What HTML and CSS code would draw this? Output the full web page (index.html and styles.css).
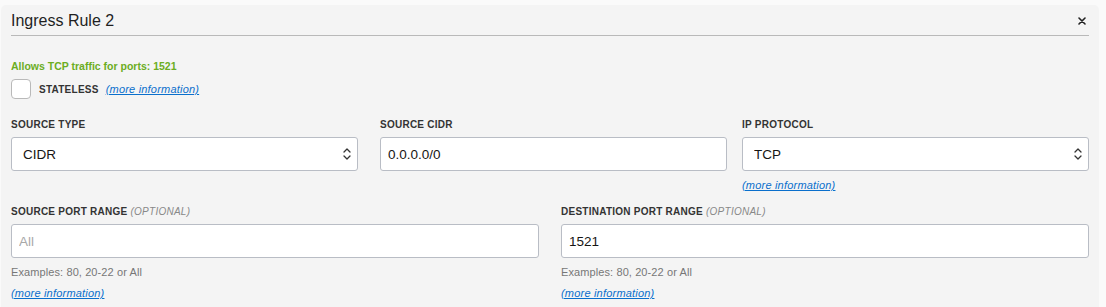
FILE: index.html
```html
<!DOCTYPE html>
<html lang="en">
<head>
  <meta charset="UTF-8">
  <meta name="viewport" content="width=device-width, initial-scale=1.0">
  <title>Ingress Rule 2</title>
  <link rel="stylesheet" href="styles.css">
</head>
<body>
  <div class="panel">
    <div class="panel-header">
      <div class="panel-title">Ingress Rule 2</div>
      <button class="close-btn" aria-label="Remove rule">
        <svg width="8" height="8" viewBox="0 0 8 8"><path d="M1 1 L7 7 M7 1 L1 7" stroke="#222" stroke-width="1.6" stroke-linecap="round"/></svg>
      </button>
    </div>

    <div class="summary">Allows TCP traffic for ports: 1521</div>

    <div class="stateless">
      <span class="checkbox"></span>
      <span class="check-label">Stateless</span>
      <a href="#" class="more-info">(more information)</a>
    </div>

    <div class="row row-three">
      <div class="field">
        <label class="field-label">Source Type</label>
        <div class="select-wrap">
          <select class="control select">
            <option>CIDR</option>
          </select>
          <svg class="chevrons" width="8" height="14" viewBox="0 0 8 14"><path d="M1 5 L4 2 L7 5 M1 9 L4 12 L7 9" fill="none" stroke="#333" stroke-width="1.3" stroke-linecap="round" stroke-linejoin="round"/></svg>
        </div>
      </div>
      <div class="field field-middle">
        <label class="field-label">Source CIDR</label>
        <input class="control" type="text" value="0.0.0.0/0">
      </div>
      <div class="field">
        <label class="field-label">IP Protocol</label>
        <div class="select-wrap">
          <select class="control select">
            <option>TCP</option>
          </select>
          <svg class="chevrons" width="8" height="14" viewBox="0 0 8 14"><path d="M1 5 L4 2 L7 5 M1 9 L4 12 L7 9" fill="none" stroke="#333" stroke-width="1.3" stroke-linecap="round" stroke-linejoin="round"/></svg>
        </div>
        <a href="#" class="more-info under">(more information)</a>
      </div>
    </div>

    <div class="row row-two">
      <div class="field">
        <label class="field-label">Source Port Range <span class="optional">(Optional)</span></label>
        <input class="control" type="text" placeholder="All">
        <div class="hint">Examples: 80, 20-22 or All</div>
        <a href="#" class="more-info under">(more information)</a>
      </div>
      <div class="field">
        <label class="field-label">Destination Port Range <span class="optional">(Optional)</span></label>
        <input class="control" type="text" value="1521">
        <div class="hint">Examples: 80, 20-22 or All</div>
        <a href="#" class="more-info under">(more information)</a>
      </div>
    </div>
  </div>
</body>
</html>
```

FILE: styles.css
```css
body {
  margin: 0;
  background-color: #fafafa;
  font-family: "Liberation Sans", Arial, sans-serif;
  color: #222;
}

.panel {
  margin: 5px 7px 0 1px;
  padding: 0 10px 20px;
  background-color: #f4f4f4;
  border-radius: 5px 5px 0 0;
}

.panel-header {
  display: flex;
  justify-content: space-between;
  align-items: center;
  height: 30px;
  border-bottom: 1px solid #b9b9b9;
}

.panel-title {
  font-size: 16px;
  color: #1f1f1f;
  padding-top: 1px;
}

.close-btn {
  border: none;
  background: none;
  padding: 0;
  margin: 2px 3px 0 0;
  display: flex;
  cursor: pointer;
}

.summary {
  margin-top: 23px;
  font-size: 10.5px;
  line-height: 14px;
  font-weight: bold;
  color: #6bad22;
}

.stateless {
  display: flex;
  align-items: center;
  margin-top: 6px;
}

.checkbox {
  width: 18px;
  height: 18px;
  border: 1px solid #b9b9b9;
  border-radius: 4px;
  background-color: white;
}

.check-label {
  margin-left: 8px;
  font-size: 10px;
  font-weight: bold;
  letter-spacing: 0.25px;
  text-transform: uppercase;
  color: #333;
}

.more-info {
  font-size: 11px;
  line-height: 14px;
  font-style: italic;
  letter-spacing: 0.2px;
  color: #0a6fcc;
  text-decoration: underline;
}

.stateless .more-info {
  margin-left: 7px;
}

.more-info.under {
  display: inline-block;
  margin-top: 7px;
}

.row {
  display: grid;
  align-items: start;
}

.row-three {
  grid-template-columns: 347px 1fr 347px;
  margin-top: 19px;
}

.field-middle {
  padding: 0 15px 0 22px;
}

.row-two {
  grid-template-columns: 1fr 1fr;
  column-gap: 22px;
  margin-top: 13px;
}

.field {
  display: flex;
  flex-direction: column;
  align-items: flex-start;
}

.field-label {
  font-size: 10px;
  line-height: 13px;
  font-weight: bold;
  letter-spacing: 0.25px;
  text-transform: uppercase;
  color: #333;
  margin-bottom: 6px;
}

.optional {
  font-weight: normal;
  font-style: italic;
  color: #888;
}

.control {
  box-sizing: border-box;
  width: 100%;
  height: 34px;
  padding: 0 7px;
  border: 1px solid #b9bdc5;
  border-radius: 3px;
  background-color: white;
  font-family: inherit;
  font-size: 13.5px;
  color: #161513;
  outline: none;
}

.control::placeholder {
  color: #a8a8a8;
}

.select-wrap {
  position: relative;
  width: 100%;
}

.select {
  appearance: none;
  -webkit-appearance: none;
  padding-left: 11px;
}

.chevrons {
  position: absolute;
  right: 7px;
  top: 10px;
  pointer-events: none;
}

.hint {
  margin-top: 7px;
  font-size: 11px;
  line-height: 14px;
  letter-spacing: 0.1px;
  color: #777;
}
```
